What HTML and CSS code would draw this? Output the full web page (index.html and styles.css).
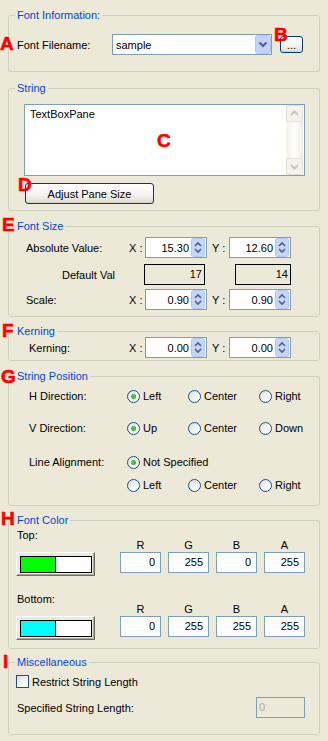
FILE: index.html
```html
<!DOCTYPE html>
<html lang="en">
<head>
  <meta charset="UTF-8" />
  <title>Font Properties</title>
  <link rel="stylesheet" href="styles.css">
</head>
<body>
  <div class="panel">

    <fieldset class="group g-info">
      <legend>Font Information:</legend>
      <div class="group-body">
        <div class="file-row">
          <span class="file-label">Font Filename:</span>
          <div class="combo">
            <span class="combo-text">sample</span>
            <svg class="combo-btn" width="16" height="19" viewBox="0 0 16 19"><rect x="0.5" y="0.5" width="15" height="18" rx="2" fill="#C1D3FB" stroke="#B4C8F6"/><path d="M4.5 7.5 8 11 11.5 7.5" fill="none" stroke="#4D6185" stroke-width="2"/></svg>
          </div>
          <button class="xp-btn browse">...</button>
        </div>
      </div>
    </fieldset>

    <fieldset class="group g-string">
      <legend>String</legend>
      <div class="group-body">
        <div class="textbox">
          <div class="textbox-text">TextBoxPane</div>
          <div class="scrollbar">
            <svg width="17" height="17" viewBox="0 0 17 17"><rect x="0.5" y="0.5" width="16" height="16" rx="2" fill="#F4F3EE" stroke="#E3E1D5"/><path d="M5 10 8.5 6.5 12 10" fill="none" stroke="#CAC7B8" stroke-width="2"/></svg>
            <svg width="17" height="17" viewBox="0 0 17 17"><rect x="0.5" y="0.5" width="16" height="16" rx="2" fill="#F4F3EE" stroke="#E3E1D5"/><path d="M5 7 8.5 10.5 12 7" fill="none" stroke="#CAC7B8" stroke-width="2"/></svg>
          </div>
        </div>
        <button class="xp-btn adjust">Adjust Pane Size</button>
      </div>
    </fieldset>

    <fieldset class="group g-size">
      <legend>Font Size</legend>
      <div class="group-body">
        <div class="val-row">
          <span class="val-label">Absolute Value:</span>
          <span class="axis">X :</span>
          <div class="spin">
            <span class="spin-val">15.30</span>
            <svg width="14" height="19" viewBox="0 0 14 19"><rect x="0.5" y="0.5" width="13" height="18" rx="2" fill="#C6D5FA" stroke="#B3C6F2"/><path d="M4 8 7 5 10 8" fill="none" stroke="#4D6185" stroke-width="1.6"/><path d="M4 11 7 14 10 11" fill="none" stroke="#4D6185" stroke-width="1.6"/></svg>
          </div>
          <span class="axis axis-y">Y :</span>
          <div class="spin">
            <span class="spin-val">12.60</span>
            <svg width="14" height="19" viewBox="0 0 14 19"><rect x="0.5" y="0.5" width="13" height="18" rx="2" fill="#C6D5FA" stroke="#B3C6F2"/><path d="M4 8 7 5 10 8" fill="none" stroke="#4D6185" stroke-width="1.6"/><path d="M4 11 7 14 10 11" fill="none" stroke="#4D6185" stroke-width="1.6"/></svg>
          </div>
        </div>
        <div class="val-row default-row">
          <span class="default-label">Default Val</span>
          <span class="readout">17</span>
          <span class="readout readout-y">14</span>
        </div>
        <div class="val-row scale-row">
          <span class="val-label">Scale:</span>
          <span class="axis">X :</span>
          <div class="spin">
            <span class="spin-val">0.90</span>
            <svg width="14" height="19" viewBox="0 0 14 19"><rect x="0.5" y="0.5" width="13" height="18" rx="2" fill="#C6D5FA" stroke="#B3C6F2"/><path d="M4 8 7 5 10 8" fill="none" stroke="#4D6185" stroke-width="1.6"/><path d="M4 11 7 14 10 11" fill="none" stroke="#4D6185" stroke-width="1.6"/></svg>
          </div>
          <span class="axis axis-y">Y :</span>
          <div class="spin">
            <span class="spin-val">0.90</span>
            <svg width="14" height="19" viewBox="0 0 14 19"><rect x="0.5" y="0.5" width="13" height="18" rx="2" fill="#C6D5FA" stroke="#B3C6F2"/><path d="M4 8 7 5 10 8" fill="none" stroke="#4D6185" stroke-width="1.6"/><path d="M4 11 7 14 10 11" fill="none" stroke="#4D6185" stroke-width="1.6"/></svg>
          </div>
        </div>
      </div>
    </fieldset>

    <fieldset class="group g-kern">
      <legend>Kerning</legend>
      <div class="group-body">
        <div class="val-row">
          <span class="val-label kern-label">Kerning:</span>
          <span class="axis">X :</span>
          <div class="spin">
            <span class="spin-val">0.00</span>
            <svg width="14" height="19" viewBox="0 0 14 19"><rect x="0.5" y="0.5" width="13" height="18" rx="2" fill="#C6D5FA" stroke="#B3C6F2"/><path d="M4 8 7 5 10 8" fill="none" stroke="#4D6185" stroke-width="1.6"/><path d="M4 11 7 14 10 11" fill="none" stroke="#4D6185" stroke-width="1.6"/></svg>
          </div>
          <span class="axis axis-y">Y :</span>
          <div class="spin">
            <span class="spin-val">0.00</span>
            <svg width="14" height="19" viewBox="0 0 14 19"><rect x="0.5" y="0.5" width="13" height="18" rx="2" fill="#C6D5FA" stroke="#B3C6F2"/><path d="M4 8 7 5 10 8" fill="none" stroke="#4D6185" stroke-width="1.6"/><path d="M4 11 7 14 10 11" fill="none" stroke="#4D6185" stroke-width="1.6"/></svg>
          </div>
        </div>
      </div>
    </fieldset>

    <fieldset class="group g-pos">
      <legend>String Position</legend>
      <div class="group-body">
        <div class="pos-row">
          <span class="pos-label">H Direction:</span>
          <span class="opt opt-1"><i class="radio on"></i>Left</span>
          <span class="opt opt-2"><i class="radio"></i>Center</span>
          <span class="opt"><i class="radio"></i>Right</span>
        </div>
        <div class="pos-row row-v">
          <span class="pos-label">V Direction:</span>
          <span class="opt opt-1"><i class="radio on"></i>Up</span>
          <span class="opt opt-2"><i class="radio"></i>Center</span>
          <span class="opt"><i class="radio"></i>Down</span>
        </div>
        <div class="pos-row row-la">
          <span class="pos-label">Line Alignment:</span>
          <span class="opt"><i class="radio on"></i>Not Specified</span>
        </div>
        <div class="pos-row row-la2">
          <span class="pos-label"></span>
          <span class="opt opt-1"><i class="radio"></i>Left</span>
          <span class="opt opt-2"><i class="radio"></i>Center</span>
          <span class="opt"><i class="radio"></i>Right</span>
        </div>
      </div>
    </fieldset>

    <fieldset class="group g-color">
      <legend>Font Color</legend>
      <div class="group-body">
        <div class="color-grid">
          <span class="color-title">Top:</span>
          <span class="chan">R</span>
          <span class="chan">G</span>
          <span class="chan">B</span>
          <span class="chan">A</span>
          <button class="color-btn"><span class="swatch"><span class="swatch-fill green"></span></span></button>
          <span class="num">0</span>
          <span class="num">255</span>
          <span class="num">0</span>
          <span class="num">255</span>
        </div>
        <div class="color-grid bottom-grid">
          <span class="color-title">Bottom:</span>
          <span class="chan">R</span>
          <span class="chan">G</span>
          <span class="chan">B</span>
          <span class="chan">A</span>
          <button class="color-btn"><span class="swatch"><span class="swatch-fill cyan"></span></span></button>
          <span class="num">0</span>
          <span class="num">255</span>
          <span class="num">255</span>
          <span class="num">255</span>
        </div>
      </div>
    </fieldset>

    <fieldset class="group g-misc">
      <legend>Miscellaneous</legend>
      <div class="group-body">
        <div class="check-row"><i class="check"></i>Restrict String Length</div>
        <div class="len-row">
          <span class="len-label">Specified String Length:</span>
          <span class="len-field">0</span>
        </div>
      </div>
    </fieldset>

    <!-- annotation letters drawn over the form -->
    <span class="mark m-a">A</span>
    <span class="mark m-b">B</span>
    <span class="mark m-c">C</span>
    <span class="mark m-d">D</span>
    <span class="mark m-e">E</span>
    <span class="mark m-f">F</span>
    <span class="mark m-g">G</span>
    <span class="mark m-h">H</span>
    <span class="mark m-i">I</span>
  </div>
</body>
</html>
```

FILE: styles.css
```css
body {
  margin: 0;
  background: #ECE9D8;
  font-family: "Liberation Sans", Arial, sans-serif;
  font-size: 11px;
  color: #000;
}

.panel {
  position: relative;
  padding: 9px 0 7px;
}

/* Group boxes */
.group {
  margin: 0 8px;
  padding: 0;
  border: 1px solid #D0D0BF;
  border-radius: 3px;
  min-width: 0;
}

.group legend {
  margin-left: 6px;
  padding: 0 2px;
  line-height: 12px;
  color: #0046D5;
}

.g-info .group-body { padding: 13px 0 16px 8px; }
.g-string { margin-top: 10px; }
.g-string .group-body { padding: 10px 0 6px 15px; }
.g-size { margin-top: 9px; }
.g-size .group-body { padding: 5px 0 6px 17px; }
.g-kern { margin-top: 8px; }
.g-kern .group-body { padding: 0 0 2px 20px; }
.g-pos { margin-top: 9px; }
.g-pos .group-body { padding: 6px 0 12px 20px; }
.g-color { margin-top: 8px; }
.g-color .group-body { padding: 2px 0 8px 7px; }
.g-misc { margin-top: 7px; }
.g-misc .group-body { padding: 7px 0 16px 7px; }

/* Buttons */
.xp-btn {
  font-family: inherit;
  font-size: 11px;
  color: #000;
  padding: 0;
  border: 1px solid #003C74;
  border-radius: 3px;
  background: linear-gradient(#FFFFFF, #F3F2EE 60%, #E3E0D6 90%, #D6D0C5);
  box-sizing: border-box;
}

.browse {
  width: 23px;
  height: 17px;
  line-height: 10px;
}

.adjust {
  display: block;
  margin: 7px 0 0 1px;
  width: 129px;
  height: 21px;
}

/* Font file row */
.file-row {
  display: flex;
  align-items: center;
  height: 21px;
}

.file-label { width: 95px; }

.combo {
  display: flex;
  align-items: center;
  justify-content: space-between;
  width: 160px;
  height: 21px;
  margin-right: 8px;
  border: 1px solid #7F9DB9;
  background: #fff;
  box-sizing: border-box;
}

.combo-text { padding-left: 3px; }
.combo-btn { display: block; }

/* String box */
.textbox {
  display: flex;
  width: 281px;
  height: 72px;
  border: 1px solid #7F9DB9;
  background: #fff;
  box-sizing: border-box;
}

.textbox-text {
  flex: 1;
  padding: 3px 5px;
}

.scrollbar {
  width: 17px;
  margin-right: 1px;
  display: flex;
  flex-direction: column;
  justify-content: space-between;
  background: linear-gradient(90deg, #F2F1EA, #FDFDFA 50%, #EEEDE5);
}

.scrollbar svg { display: block; }

/* Value rows */
.val-row {
  display: flex;
  align-items: center;
  height: 21px;
}

.default-row { margin-top: 6px; }
.scale-row { margin-top: 4px; }

.val-label { width: 103px; }
.kern-label { width: 100px; }

.axis { width: 16px; }
.axis-y { margin-left: 5px; width: 17px; }

.spin {
  display: flex;
  align-items: center;
  justify-content: flex-end;
  width: 62px;
  height: 21px;
  border: 1px solid #7F9DB9;
  background: #fff;
  box-sizing: border-box;
  padding-right: 1px;
}

.spin-val { padding-right: 2px; }
.spin svg { display: block; }

.default-label {
  width: 118px;
  padding-left: 36px;
  box-sizing: border-box;
}

.readout {
  width: 61px;
  height: 21px;
  line-height: 19px;
  border: 1px solid #000;
  box-sizing: border-box;
  text-align: right;
  padding-right: 2px;
}

.readout-y {
  width: 56px;
  margin-left: 30px;
}

/* Position radios */
.pos-row {
  display: flex;
  align-items: center;
  height: 16px;
}

.row-v { margin-top: 16px; }
.row-la { margin-top: 18px; }
.row-la2 { margin-top: 7px; }

.pos-label { width: 98px; }

.opt {
  display: flex;
  align-items: center;
  gap: 3px;
}

.opt-1 { width: 61px; }
.opt-2 { width: 71px; }

.radio {
  display: flex;
  align-items: center;
  justify-content: center;
  width: 13px;
  height: 13px;
  border: 1px solid #1C5180;
  border-radius: 50%;
  background: linear-gradient(135deg, #DCDCD7, #FFFFFF 80%);
  box-sizing: border-box;
}

.radio.on::after {
  content: "";
  width: 5px;
  height: 5px;
  border-radius: 50%;
  background: radial-gradient(circle at 40% 40%, #55D255, #21A121);
}

/* Font colour */
.color-grid {
  display: grid;
  grid-template-columns: 97px repeat(4, 41px);
  grid-template-rows: 24px 24px;
  column-gap: 7px;
}

.bottom-grid { margin-top: 16px; }

.color-title {
  align-self: start;
  line-height: 14px;
  padding-left: 1px;
}

.chan {
  align-self: end;
  line-height: 14px;
  text-align: center;
}

.num {
  align-self: start;
  height: 21px;
  line-height: 19px;
  border: 1px solid #7F9DB9;
  background: #fff;
  box-sizing: border-box;
  text-align: right;
  padding-right: 5px;
}

.color-btn {
  width: 79px;
  height: 24px;
  padding: 3px;
  border: 1px solid;
  border-color: #FFFFFF #716F64 #716F64 #FFFFFF;
  box-shadow: inset -1px -1px #ACA899;
  background: #ECE9D8;
  box-sizing: border-box;
  display: block;
}

.swatch {
  display: block;
  width: 72px;
  height: 17px;
  border: 1px solid #000;
  background: #fff;
  box-sizing: border-box;
}

.swatch-fill {
  display: block;
  width: 35px;
  height: 100%;
  border-right: 1px solid #000;
  box-sizing: border-box;
}

.green { background: #00FF00; }
.cyan { background: #00FFFF; }

/* Miscellaneous */
.check-row {
  display: flex;
  align-items: center;
  gap: 3px;
  height: 13px;
}

.check {
  width: 13px;
  height: 13px;
  border: 1px solid #1C5180;
  background: linear-gradient(135deg, #DCDCD7, #FFFFFF 80%);
  box-sizing: border-box;
}

.len-row {
  display: flex;
  align-items: center;
  margin-top: 9px;
}

.len-label {
  flex: 1;
  padding-left: 1px;
}

.len-field {
  width: 49px;
  height: 21px;
  line-height: 19px;
  margin-right: 14px;
  padding-left: 2px;
  border: 1px solid #7F9DB9;
  box-sizing: border-box;
  color: #ACA899;
}

/* Red annotation letters */
.mark {
  position: absolute;
  font-size: 19px;
  line-height: 19px;
  font-weight: bold;
  color: #FF0000;
  -webkit-text-stroke: 0.6px #FF0000;
}

.m-a { left: 0; top: 34px; }
.m-b { left: 274px; top: 25px; }
.m-c { left: 157px; top: 131px; }
.m-d { left: 18px; top: 175px; }
.m-e { left: 2px; top: 215px; }
.m-f { left: 2px; top: 321px; }
.m-g { left: 1px; top: 367px; }
.m-h { left: 1px; top: 509px; }
.m-i { left: 3px; top: 652px; }
```
